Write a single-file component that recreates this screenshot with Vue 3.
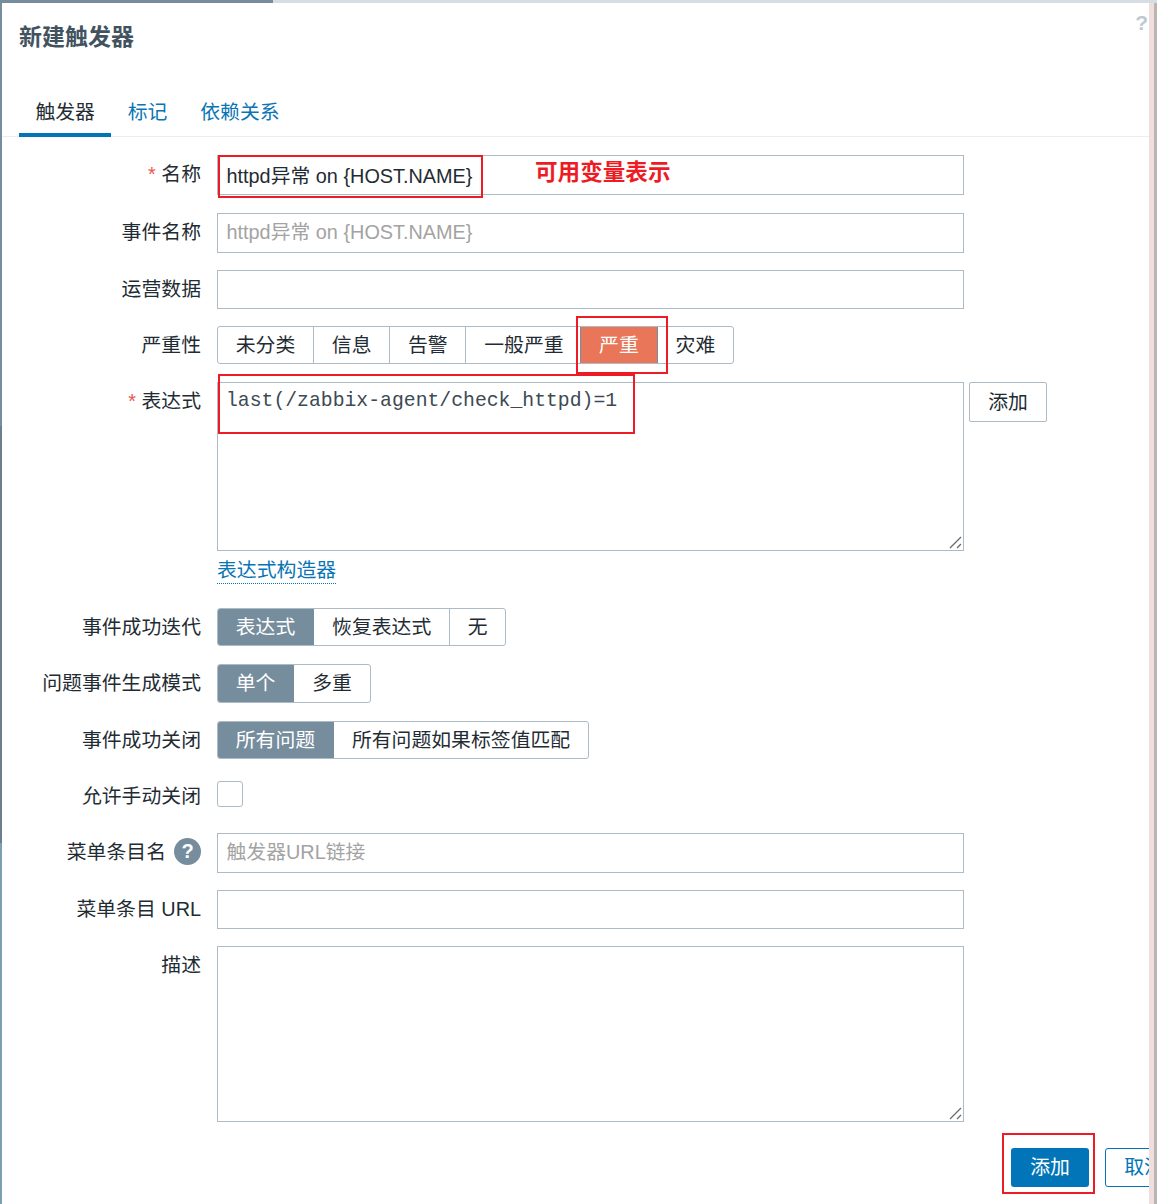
<script setup>
const tabs = ['标记', '依赖关系']
const severity = ['未分类', '信息', '告警', '一般严重', '严重', '灾难']
const recovery = ['表达式', '恢复表达式', '无']
const mode = ['单个', '多重']
const closing = ['所有问题', '所有问题如果标签值匹配']
</script>

<template>
  <div class="page">
    <div class="topstrip"><i class="dark"></i><i class="light"></i></div>
    <div class="middle">
      <div class="leftstrip"></div>
      <main class="modal">
        <header class="head">
          <h1>新建触发器</h1>
          <span class="help">?</span>
        </header>
        <nav class="tabs">
          <span class="tab active">触发器</span>
          <a v-for="t in tabs" :key="t" class="tab">{{ t }}</a>
        </nav>

        <form class="form" @submit.prevent>
          <div class="row r-name">
            <label><em>*</em> 名称</label>
            <input class="field" value="httpd异常 on {HOST.NAME}" />
            <span class="note">可用变量表示</span>
            <span class="redbox box-name"></span>
          </div>
          <div class="row r-event">
            <label>事件名称</label>
            <input class="field" placeholder="httpd异常 on {HOST.NAME}" />
          </div>
          <div class="row r-op">
            <label>运营数据</label>
            <input class="field short" />
          </div>
          <div class="row r-sev">
            <label>严重性</label>
            <div class="seg">
              <span v-for="s in severity" :key="s" :class="{ high: s === '严重', prehigh: s === '一般严重' }">{{ s }}</span>
            </div>
            <span class="redbox box-sev"></span>
          </div>
          <div class="row r-expr">
            <label><em>*</em> 表达式</label>
            <div class="areawrap">
              <textarea class="area expr" spellcheck="false">last(/zabbix-agent/check_httpd)=1</textarea>
              <svg class="grip" width="14" height="14" viewBox="0 0 14 14"><path d="M2 13 13 2M9 13l4-4" /></svg>
            </div>
            <button type="button" class="plain">添加</button>
            <span class="redbox box-expr"></span>
          </div>
          <div class="row r-link">
            <label></label>
            <a class="builder">表达式构造器</a>
          </div>
          <div class="row r-rec">
            <label>事件成功迭代</label>
            <div class="seg">
              <span v-for="(s, i) in recovery" :key="s" :class="{ on: i === 0 }">{{ s }}</span>
            </div>
          </div>
          <div class="row r-mode">
            <label>问题事件生成模式</label>
            <div class="seg tall">
              <span v-for="(s, i) in mode" :key="s" :class="{ on: i === 0 }">{{ s }}</span>
            </div>
          </div>
          <div class="row r-close">
            <label>事件成功关闭</label>
            <div class="seg">
              <span v-for="(s, i) in closing" :key="s" :class="{ on: i === 0 }">{{ s }}</span>
            </div>
          </div>
          <div class="row r-check">
            <label>允许手动关闭</label>
            <span class="check"></span>
          </div>
          <div class="row r-menu">
            <label class="withhint">菜单条目名<b class="hint">?</b></label>
            <input class="field" placeholder="触发器URL链接" />
          </div>
          <div class="row r-url">
            <label>菜单条目 URL</label>
            <input class="field short" />
          </div>
          <div class="row r-desc">
            <label>描述</label>
            <div class="areawrap">
              <textarea class="area desc"></textarea>
              <svg class="grip" width="14" height="14" viewBox="0 0 14 14"><path d="M2 13 13 2M9 13l4-4" /></svg>
            </div>
          </div>
        </form>

        <footer class="foot">
          <div class="addwrap">
            <button type="button" class="primary">添加</button>
            <span class="redbox box-add"></span>
          </div>
          <button type="button" class="cancel">取消</button>
        </footer>
      </main>
      <div class="rightstrip"></div>
    </div>
  </div>
</template>

<style>
html, body { margin: 0; background: #fff; }
</style>

<style scoped>
.page {
  width: 1157px;
  height: 1204px;
  overflow: hidden;
  display: flex;
  flex-direction: column;
  font-family: "Liberation Sans", "Noto Sans CJK SC", sans-serif;
  font-size: 19.85px;
  color: #1f2c33;
  background: #fff;
}
.topstrip { display: flex; height: 3px; flex: none; }
.topstrip .dark { width: 273px; background: #768d9e; }
.topstrip .light { flex: 1; background: #d5dee5; }
.middle { flex: 1; display: flex; min-height: 0; }
.leftstrip {
  width: 2px;
  flex: none;
  background: linear-gradient(#768d9e 0, #768d9e 423px, #6d7f8b 423px, #6d7f8b 840px, #7d9fb2 840px);
}
.rightstrip {
  width: 8px;
  flex: none;
  background: linear-gradient(90deg, #efdedc 0, #efdedc 5px, #b9b5b2 5px);
}
.modal { flex: 1; min-width: 0; overflow: hidden; display: flex; flex-direction: column; }

.head { position: relative; height: 67px; flex: none; }
.head h1 {
  margin: 0;
  padding: 19px 0 0 17px;
  font-size: 23px;
  line-height: 30px;
  font-weight: 700;
  color: #42535f;
}
.help {
  position: absolute;
  right: 1px;
  top: 8px;
  font-size: 21px;
  font-weight: 700;
  color: #bccad3;
}

.tabs {
  display: flex;
  height: 67px;
  box-sizing: border-box;
  padding: 27px 0 0 17px;
  border-bottom: 1px solid #ebeef0;
  flex: none;
}
.tab {
  height: 40px;
  line-height: 30px;
  padding: 0 16.4px;
  color: #0a75b4;
  box-sizing: border-box;
}
.tab.active { color: #1f2c33; border-bottom: 4px solid #0275b8; }

.form { display: flex; flex-direction: column; padding-top: 18px; }
.row { position: relative; display: flex; align-items: flex-start; }
.row label {
  width: 199px;
  margin-right: 16px;
  flex: none;
  text-align: right;
  line-height: 38px;
  white-space: nowrap;
}
.row label em { font-style: normal; color: #e8574a; }
.row label.withhint {
  display: flex;
  justify-content: flex-end;
  align-items: center;
  height: 37px;
}
.r-name { margin-bottom: 18px; }
.r-event { margin-bottom: 17px; }
.r-op { margin-bottom: 17px; }
.r-sev { margin-bottom: 18px; }
.r-expr { margin-bottom: 5px; }
.r-link { margin-bottom: 20px; height: 32px; }
.r-rec { margin-bottom: 18px; }
.r-mode { margin-bottom: 18px; }
.r-close { margin-bottom: 22px; }
.r-check { margin-bottom: 26px; height: 26px; }
.r-check label { line-height: 30px; }
.r-menu { margin-bottom: 17px; }
.r-url { margin-bottom: 17px; }
.r-desc { margin-bottom: 26px; }

.field {
  box-sizing: border-box;
  height: 40px;
  width: 747px;
  padding: 0 8px 2px 8.5px;
  border: 1px solid #acbbc5;
  font: inherit;
  color: #1f2c33;
  outline: none;
  background: #fff;
}
.field.short { height: 39px; }
.field::placeholder { color: #a3a3a3; opacity: 1; }

.areawrap { position: relative; width: 747px; flex: none; }
.area {
  box-sizing: border-box;
  width: 747px;
  display: block;
  padding: 6px 8px;
  border: 1px solid #acbbc5;
  color: #1f2c33;
  outline: none;
  background: #fff;
  margin: 0;
  resize: none;
}
.expr {
  height: 169px;
  font: 19.75px/24px "Liberation Mono", monospace;
  padding-top: 6px;
  color: #3c4a53;
}
.desc { height: 176px; font: inherit; }
.grip {
  position: absolute;
  right: 2px;
  bottom: 2px;
  fill: none;
  stroke: #6a6a6a;
  stroke-width: 1.3;
}

.plain {
  margin-left: 5px;
  box-sizing: border-box;
  width: 78px;
  height: 40px;
  border: 1px solid #acbbc5;
  border-radius: 2px;
  background: #fff;
  font: inherit;
  color: #1f2c33;
  padding: 0 0 3px;
}

.seg {
  display: flex;
  height: 38px;
  box-sizing: border-box;
  border: 1px solid #acbbc5;
  border-radius: 3px;
  overflow: hidden;
}
.seg.tall { height: 39px; }
.seg span {
  padding: 0 17.75px;
  line-height: 36px;
  border-right: 1px solid #acbbc5;
  white-space: nowrap;
}
.seg span:last-child { border-right: 0; }
.seg .on { background: #768d9e; color: #fff; border-right-color: #768d9e; padding-right: 18px; }
.seg .prehigh { border-right: 0; padding-right: 16.5px; }
.seg .high {
  background: #e97659;
  color: #fff;
  border: 1px solid #768d9e;
  border-width: 0 1px;
  padding: 0 18px;
}

.builder {
  color: #0a75b4;
  line-height: 27px;
  height: 26px;
  border-bottom: 1px dotted #0a75b4;
  margin-top: 1px;
}

.check {
  box-sizing: border-box;
  width: 26px;
  height: 26px;
  border: 1px solid #acbbc5;
  border-radius: 3px;
}
.hint {
  display: inline-flex;
  align-items: center;
  justify-content: center;
  width: 27px;
  height: 27px;
  border-radius: 50%;
  background: #768d9e;
  color: #fff;
  font-size: 20px;
  margin-left: 8px;
  line-height: 27px;
}

.foot { display: flex; padding-left: 1009px; flex: none; }
.addwrap { position: relative; }
.primary {
  box-sizing: border-box;
  width: 78px;
  height: 39px;
  border: 0;
  border-radius: 3px;
  background: #0275b8;
  color: #fff;
  font: inherit;
  padding: 0 0 4px;
  display: block;
}
.cancel {
  box-sizing: border-box;
  flex: none;
  width: 78px;
  height: 39px;
  margin-left: 16px;
  border: 1px solid #0275b8;
  border-radius: 3px;
  background: #fff;
  color: #0275b8;
  font: inherit;
  padding: 0 0 4px;
}

.note {
  position: absolute;
  left: 533px;
  top: 1px;
  font-size: 22.6px;
  line-height: 34px;
  font-weight: 700;
  color: #ed1c24;
}
.redbox {
  position: absolute;
  box-sizing: border-box;
  border: 2px solid #ed1c24;
  pointer-events: none;
}
.box-name { left: 216px; top: 0; width: 265px; height: 43px; }
.box-sev { left: 574px; top: -10px; width: 92px; height: 58px; }
.box-expr { left: 216px; top: -8px; width: 417px; height: 60px; }
.box-add { left: -9px; top: -15px; width: 93px; height: 61px; }
</style>
